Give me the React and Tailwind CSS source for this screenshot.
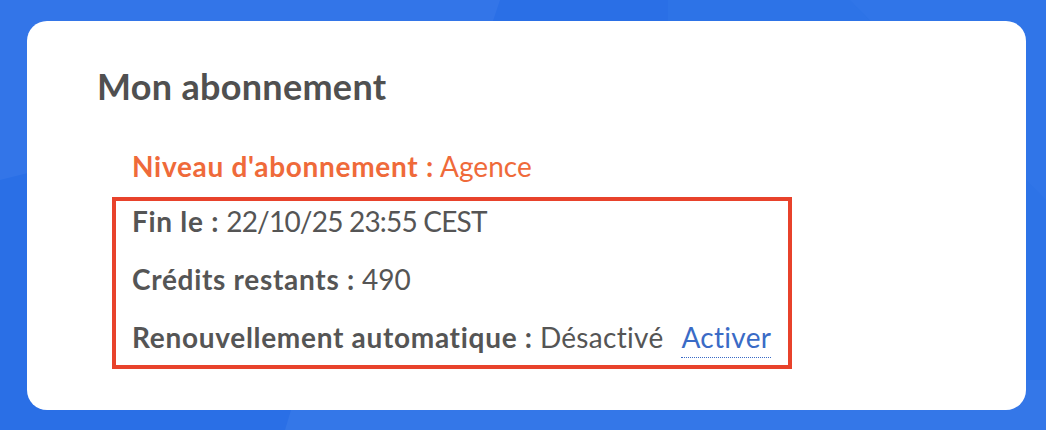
export default function App() {
  const font = { fontFamily: '"Lato", "Noto Sans", sans-serif' };
  return (
    <div className="relative w-[1046px] h-[430px] overflow-hidden bg-[#2a6fe6] pt-[21px] pl-[27px] pr-[20px] pb-[20px]" style={font}>
      <svg className="absolute inset-0" width="1046" height="430" viewBox="0 0 1046 430">
        <polygon points="0,0 500,0 480,60 0,180" fill="#3375e8" />
        <polygon points="668,0 1046,0 1046,430 1046,430 668,430" fill="#3176e8" opacity="0.6" />
        <polygon points="285,430 300,380 1046,380 1046,430" fill="#3477e8" />
        <polygon points="850,0 1046,0 1046,200" fill="#3478e9" opacity="0.5" />
      </svg>
      <div className="relative h-[389px] w-[999px] rounded-[20px] bg-white pt-[45px] pl-[70px]">
        <h2 className="text-[36px] leading-[40px] font-bold tracking-[0.3px] text-[#505050]">Mon abonnement</h2>
        <div className="mt-[40px] pl-[35px] text-[28px] leading-[40px] text-[#ef6a3a]">
          <span className="font-bold tracking-[0.7px]">Niveau d'abonnement :</span> Agence
        </div>
        <div className="mt-[11px] ml-[15px] w-[680px] border-4 border-[#e8422b] pl-[16px] pb-[7px] flex flex-col gap-[18px] text-[28px] leading-[40px] text-[#555555]">
          <div><span className="font-bold tracking-[0.7px]">Fin le :</span> <span className="tracking-[-0.8px]">22/10/25 23:55 CEST</span></div>
          <div><span className="font-bold tracking-[0.7px]">Crédits restants :</span> 490</div>
          <div className="flex items-baseline">
            <span><span className="font-bold tracking-[0.7px]">Renouvellement automatique :</span> <span className="tracking-[0.3px]">Désactivé</span></span>
            <a className="ml-[18px] text-[#3a6bc6] tracking-[0.3px] border-b border-dotted border-[#3a6bc6]">Activer</a>
          </div>
        </div>
      </div>
    </div>
  );
}
